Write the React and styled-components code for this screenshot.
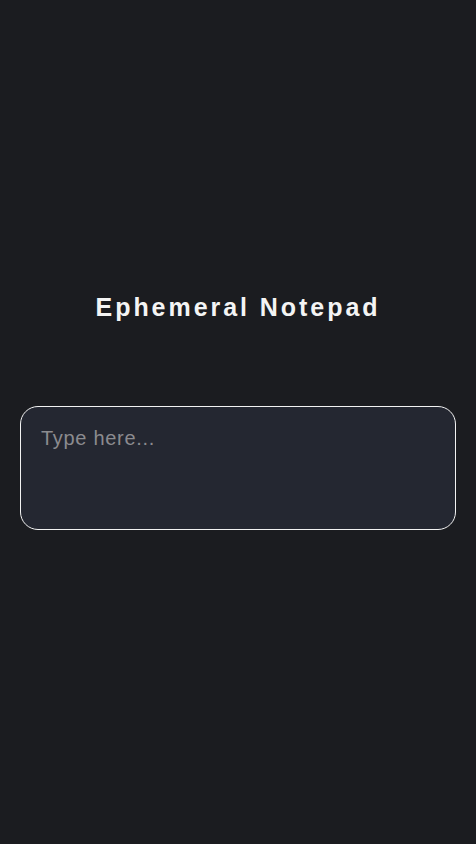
import React, { useState } from 'react';
import styled, { createGlobalStyle } from 'styled-components';

const GlobalStyle = createGlobalStyle`
  html, body {
    margin: 0;
    padding: 0;
    background: #1b1c20;
  }
  * {
    box-sizing: border-box;
  }
`;

const Page = styled.main`
  min-height: 100vh;
  display: flex;
  flex-direction: column;
  justify-content: center;
  padding: 0 20px 21px;
  font-family: "Liberation Sans", Arial, sans-serif;
`;

const Title = styled.h1`
  margin: 0 0 85px;
  text-align: center;
  color: #f4f4f4;
  font-size: 25px;
  font-weight: 700;
  letter-spacing: 2.95px;
  line-height: 28px;
`;

const NoteArea = styled.textarea`
  display: block;
  width: 100%;
  height: 124px;
  padding: 20px;
  border: 1px solid #f2f2f2;
  border-radius: 18px;
  background: #242731;
  color: #e6e6e6;
  font-family: inherit;
  font-size: 20px;
  letter-spacing: 0.7px;
  resize: none;
  outline: none;

  &::placeholder {
    color: #8b8b8f;
  }
`;

const App = () => {
  const [text, setText] = useState('');

  return (
    <>
      <GlobalStyle />
      <Page>
        <Title>Ephemeral Notepad</Title>
        <NoteArea
          value={text}
          onChange={(e) => setText(e.target.value)}
          placeholder="Type here..."
        />
      </Page>
    </>
  );
};

export default App;
